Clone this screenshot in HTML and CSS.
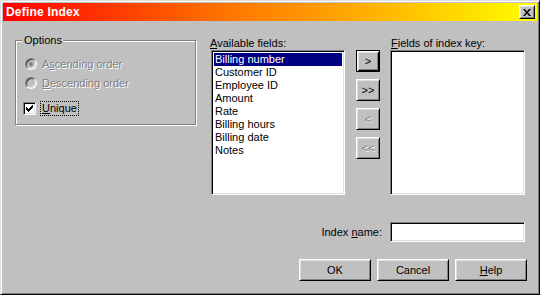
FILE: index.html
```html
<!DOCTYPE html>
<html lang="en">
<head>
    <meta charset="UTF-8">
    <title>Define Index</title>
    <link rel="stylesheet" href="styles.css">
</head>
<body>
<div class="window">
    <div class="titlebar">
        <span class="title">Define Index</span>
        <button class="close-btn" type="button">
            <svg width="8" height="7" viewBox="0 0 8 7"><path d="M0 0h2l2 2.5L6 0h2L5 3.5 8 7H6L4 4.5 2 7H0l3-3.5z" fill="#000"/></svg>
        </button>
    </div>
    <div class="dialog">
        <div class="top-row">
            <div class="group">
                <span class="group-title">Options</span>
                <div class="option disabled first">
                    <span class="radio checked"></span>
                    <span>A<u>s</u>cending order</span>
                </div>
                <div class="option disabled">
                    <span class="radio"></span>
                    <span><u>D</u>escending order</span>
                </div>
                <div class="option check-row">
                    <span class="checkbox">
                        <svg width="7" height="7" viewBox="0 0 7 7"><path d="M0 2h1v1h1v1h1V3h1V2h1V1h1V0h1v3H6v1H5v1H4v1H3v1H2V6H1V5H0z" fill="#000"/></svg>
                    </span>
                    <span class="focus-label"><u>U</u>nique</span>
                </div>
            </div>

            <div class="field-col available">
                <label><u>A</u>vailable fields:</label>
                <div class="listbox">
                    <div class="item selected">Billing number</div>
                    <div class="item">Customer ID</div>
                    <div class="item">Employee ID</div>
                    <div class="item">Amount</div>
                    <div class="item">Rate</div>
                    <div class="item">Billing hours</div>
                    <div class="item">Billing date</div>
                    <div class="item">Notes</div>
                </div>
            </div>

            <div class="move-buttons">
                <button class="btn default" type="button">&gt;</button>
                <button class="btn" type="button">&gt;&gt;</button>
                <button class="btn" type="button" disabled>&lt;</button>
                <button class="btn" type="button" disabled>&lt;&lt;</button>
            </div>

            <div class="field-col key">
                <label><u>F</u>ields of index key:</label>
                <div class="listbox"></div>
            </div>
        </div>

        <div class="name-row">
            <label>Index <u>n</u>ame:</label>
            <input type="text" class="textbox">
        </div>

        <div class="button-row">
            <button class="btn wide" type="button">OK</button>
            <button class="btn wide" type="button">Cancel</button>
            <button class="btn wide" type="button"><u>H</u>elp</button>
        </div>
    </div>
</div>
</body>
</html>
```

FILE: styles.css
```css
* {
    box-sizing: border-box;
}

body {
    margin: 0;
    font-family: 'Liberation Sans', Arial, sans-serif;
    font-size: 11px;
    color: #000;
}

.window {
    width: 540px;
    height: 295px;
    padding: 2px;
    background-color: #c0c0c0;
    border: 1px solid;
    border-color: #dfdfdf #000 #000 #dfdfdf;
    box-shadow: inset 1px 1px #fff, inset -1px -1px #808080;
}

.titlebar {
    height: 18px;
    display: flex;
    align-items: center;
    justify-content: space-between;
    padding: 0 2px 0 3px;
    background: linear-gradient(to right, #ff0000 0%, #ff7000 40%, #ffb400 70%, #ffff00 100%);
}

.title {
    color: #fff;
    font-weight: bold;
    font-size: 12px;
    letter-spacing: 0.2px;
}

.close-btn {
    width: 16px;
    height: 14px;
    padding: 0;
    display: flex;
    align-items: center;
    justify-content: center;
    background-color: #c0c0c0;
    border: 1px solid;
    border-color: #fff #000 #000 #fff;
    box-shadow: inset 1px 1px #dfdfdf, inset -1px -1px #808080;
}

.dialog {
    padding: 16px 0 0 12px;
}

.top-row {
    display: flex;
    align-items: flex-start;
}

/* Options group */

.group {
    width: 181px;
    height: 85px;
    margin-top: 3px;
    padding-left: 9px;
    border: 1px solid #808080;
    box-shadow: inset 1px 1px #fff, 1px 1px #fff;
}

.group-title {
    display: block;
    width: max-content;
    margin: -7px 0 0 -3px;
    padding: 0 2px;
    line-height: 13px;
    background-color: #c0c0c0;
}

.option {
    display: flex;
    align-items: center;
    height: 16px;
    margin-top: 3px;
}

.option.first {
    margin-top: 9px;
}

.option.check-row {
    margin-top: 9px;
    margin-left: -2px;
}

.disabled {
    color: #808080;
    text-shadow: 1px 1px #fff;
}

.radio {
    width: 12px;
    height: 12px;
    margin-right: 5px;
    border-radius: 50%;
    display: flex;
    align-items: center;
    justify-content: center;
    background-color: #c0c0c0;
    border: 1px solid;
    border-color: #808080 #fff #fff #808080;
    box-shadow: inset 1px 1px #404040, inset -1px -1px #dfdfdf;
}

.radio.checked::after {
    content: "";
    width: 4px;
    height: 4px;
    border-radius: 50%;
    background-color: #808080;
}

.checkbox {
    width: 13px;
    height: 13px;
    margin-right: 4px;
    display: flex;
    align-items: center;
    justify-content: center;
    background-color: #fff;
    border: 1px solid;
    border-color: #808080 #fff #fff #808080;
    box-shadow: inset 1px 1px #000, inset -1px -1px #dfdfdf;
}

.focus-label {
    padding: 0 1px;
    line-height: 13px;
    border: 1px dotted #000;
}

/* field lists */

.field-col label {
    display: block;
    line-height: 13px;
}

.available {
    width: 135px;
    margin-left: 14px;
}

.available .listbox {
    margin-left: 1px;
    width: 134px;
}

.key {
    width: 135px;
    margin-left: 10px;
}

.key label {
    padding-left: 1px;
}

.listbox {
    width: 135px;
    height: 145px;
    padding: 2px;
    background-color: #fff;
    border: 1px solid;
    border-color: #808080 #fff #fff #808080;
    box-shadow: inset 1px 1px #000, inset -1px -1px #dfdfdf;
}

.item {
    height: 13px;
    line-height: 13px;
    padding-left: 1px;
    white-space: nowrap;
}

.item.selected {
    background-color: #000080;
    color: #fff;
}

.move-buttons {
    display: flex;
    flex-direction: column;
    gap: 7px;
    margin: 13px 0 0 11px;
}

/* buttons */

.btn {
    width: 24px;
    height: 22px;
    padding: 0;
    font-family: inherit;
    font-size: 11px;
    color: #000;
    background-color: #c0c0c0;
    border: 1px solid;
    border-color: #fff #000 #000 #fff;
    box-shadow: inset 1px 1px #dfdfdf, inset -1px -1px #808080;
}

.btn.default {
    border-color: #000;
    box-shadow: inset 1px 1px #fff, inset -1px -1px #000, inset 2px 2px #dfdfdf, inset -2px -2px #808080;
}

.btn:disabled {
    color: #808080;
    text-shadow: 1px 1px #fff;
}

.btn.wide {
    width: 72px;
    height: 22px;
}

.name-row {
    display: flex;
    align-items: center;
    justify-content: flex-end;
    margin-top: 27px;
    padding-right: 12px;
}

.name-row label {
    margin-right: 8px;
}

.textbox {
    width: 135px;
    height: 20px;
    margin: 0;
    background-color: #fff;
    border: 1px solid;
    border-color: #808080 #fff #fff #808080;
    box-shadow: inset 1px 1px #000, inset -1px -1px #dfdfdf;
    outline: none;
}

.button-row {
    display: flex;
    justify-content: flex-end;
    gap: 6px;
    margin-top: 17px;
    padding-right: 10px;
}
```
